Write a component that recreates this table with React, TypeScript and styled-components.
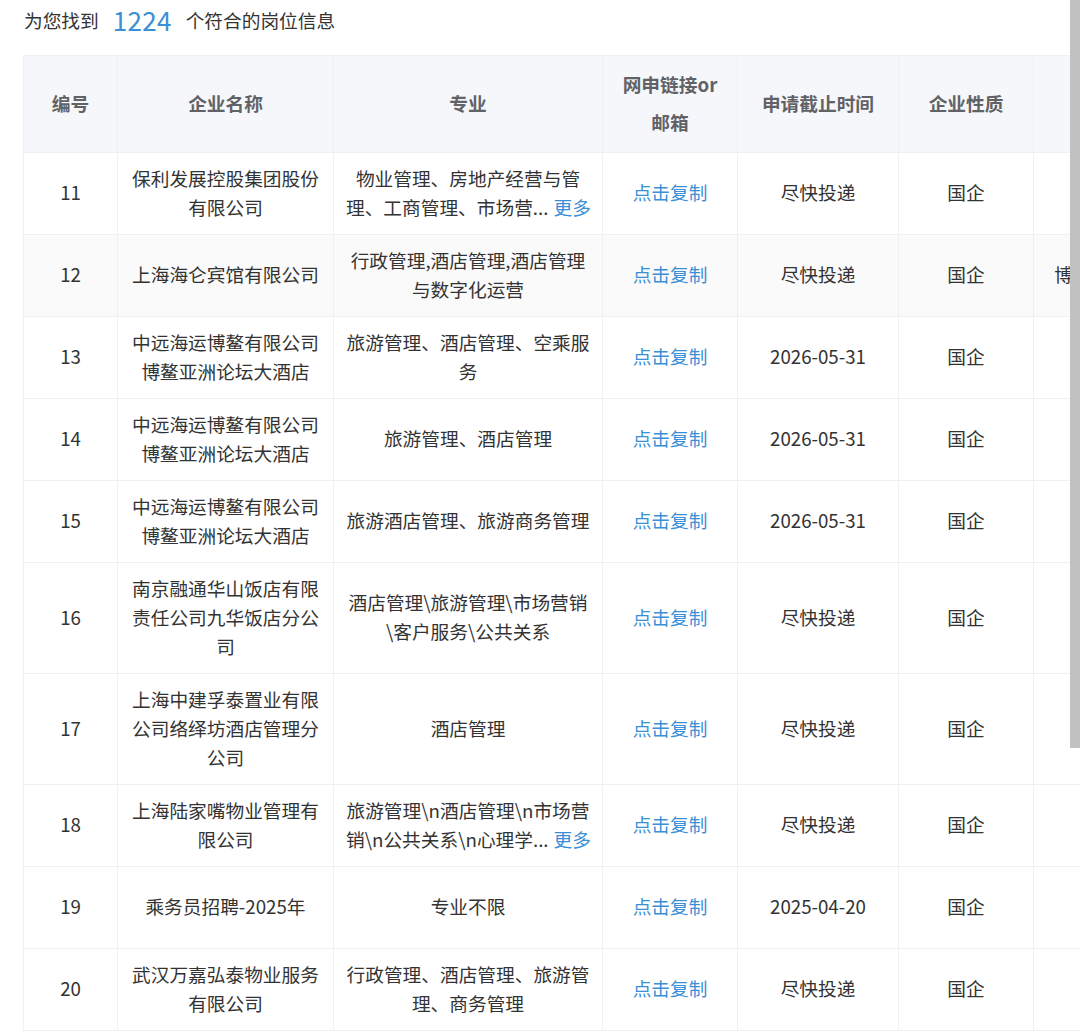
import React from "react";
import styled, { createGlobalStyle } from "styled-components";

const GlobalStyle = createGlobalStyle`
  html, body {
    margin: 0;
    padding: 0;
    overflow: hidden;
    background: #ffffff;
  }
  body {
    font-family: "Noto Sans CJK SC", "Noto Sans", sans-serif;
    color: #333333;
  }
`;

const Page = styled.div`
  padding: 0 0 0 23px;
  width: 1080px;
  box-sizing: border-box;
  overflow: hidden;
`;

const Summary = styled.div`
  display: flex;
  align-items: center;
  height: 38px;
  margin: 0 0 17px 1px;
  font-size: 18.7px;
  color: #333333;
`;

const Count = styled.span`
  font-size: 26px;
  color: #3b8fd6;
  margin: 0 14px;
  letter-spacing: 0.3px;
`;

const Table = styled.table`
  border-collapse: collapse;
  table-layout: fixed;
  width: 1145px;
  font-size: 18.7px;
  border-left: 1px solid #eef0f4;
`;

const HeadCell = styled.th<{ $w: number }>`
  width: ${(p) => p.$w}px;
  background: #f6f7fa;
  color: #606266;
  font-weight: 700;
  line-height: 38px;
  padding: 9px 12px 11px;
  text-align: center;
  border: 1px solid #eef0f4;
  border-left: none;
  box-sizing: border-box;
`;

const Row = styled.tr<{ $shade?: boolean }>`
  height: 82px;
  background: ${(p) => (p.$shade ? "#fafafa" : "#ffffff")};
`;

const Cell = styled.td<{ $link?: boolean }>`
  padding: 9.5px 12px 13.5px;
  line-height: 29px;
  text-align: center;
  vertical-align: middle;
  color: ${(p) => (p.$link ? "#3b8fd6" : "#333333")};
  border: 1px solid #eef0f4;
  border-left: none;
  border-top: none;
  box-sizing: border-box;
  word-break: break-all;
`;

const ClampLine = styled.div`
  white-space: nowrap;
`;

const More = styled.span`
  color: #3b8fd6;
  margin-left: 5px;
`;

const ScrollThumb = styled.div`
  position: fixed;
  right: 0;
  top: 0;
  width: 10px;
  height: 748px;
  background: #c1c1c1;
`;

type Job = {
  id: number;
  name: string;
  major: string | [string, string];
  deadline: string;
  kind: string;
  degree?: string;
  shade?: boolean;
};

const jobs: Job[] = [
  { id: 11, name: "保利发展控股集团股份有限公司", major: ["物业管理、房地产经营与管", "理、工商管理、市场营..."], deadline: "尽快投递", kind: "国企" },
  { id: 12, name: "上海海仑宾馆有限公司", major: "行政管理,酒店管理,酒店管理与数字化运营", deadline: "尽快投递", kind: "国企", degree: "博士、硕士", shade: true },
  { id: 13, name: "中远海运博鳌有限公司博鳌亚洲论坛大酒店", major: "旅游管理、酒店管理、空乘服务", deadline: "2026-05-31", kind: "国企" },
  { id: 14, name: "中远海运博鳌有限公司博鳌亚洲论坛大酒店", major: "旅游管理、酒店管理", deadline: "2026-05-31", kind: "国企" },
  { id: 15, name: "中远海运博鳌有限公司博鳌亚洲论坛大酒店", major: "旅游酒店管理、旅游商务管理", deadline: "2026-05-31", kind: "国企" },
  { id: 16, name: "南京融通华山饭店有限责任公司九华饭店分公司", major: "酒店管理\\旅游管理\\市场营销\\客户服务\\公共关系", deadline: "尽快投递", kind: "国企" },
  { id: 17, name: "上海中建孚泰置业有限公司络绎坊酒店管理分公司", major: "酒店管理", deadline: "尽快投递", kind: "国企" },
  { id: 18, name: "上海陆家嘴物业管理有限公司", major: ["旅游管理\\n酒店管理\\n市场营", "销\\n公共关系\\n心理学..."], deadline: "尽快投递", kind: "国企" },
  { id: 19, name: "乘务员招聘-2025年", major: "专业不限", deadline: "2025-04-20", kind: "国企" },
  { id: 20, name: "武汉万嘉弘泰物业服务有限公司", major: "行政管理、酒店管理、旅游管理、商务管理", deadline: "尽快投递", kind: "国企" },
];

const columns: { title: string; w: number }[] = [
  { title: "编号", w: 94 },
  { title: "企业名称", w: 216 },
  { title: "专业", w: 269 },
  { title: "网申链接or邮箱", w: 135 },
  { title: "申请截止时间", w: 161 },
  { title: "企业性质", w: 135 },
  { title: "学历", w: 135 },
];

function Major({ value }: { value: Job["major"] }) {
  if (typeof value === "string") return <>{value}</>;
  return (
    <>
      <ClampLine>{value[0]}</ClampLine>
      <ClampLine>
        {value[1]}
        <More>更多</More>
      </ClampLine>
    </>
  );
}

export default function App() {
  return (
    <>
      <GlobalStyle />
      <Page>
        <Summary>
          为您找到<Count>1224</Count>个符合的岗位信息
        </Summary>
        <Table>
          <thead>
            <tr>
              {columns.map((c) => (
                <HeadCell key={c.title} $w={c.w}>
                  {c.title}
                </HeadCell>
              ))}
            </tr>
          </thead>
          <tbody>
            {jobs.map((j) => (
              <Row key={j.id} $shade={j.shade}>
                <Cell>{j.id}</Cell>
                <Cell>{j.name}</Cell>
                <Cell>
                  <Major value={j.major} />
                </Cell>
                <Cell $link>点击复制</Cell>
                <Cell>{j.deadline}</Cell>
                <Cell>{j.kind}</Cell>
                <Cell>{j.degree ?? ""}</Cell>
              </Row>
            ))}
          </tbody>
        </Table>
      </Page>
      <ScrollThumb />
    </>
  );
}
